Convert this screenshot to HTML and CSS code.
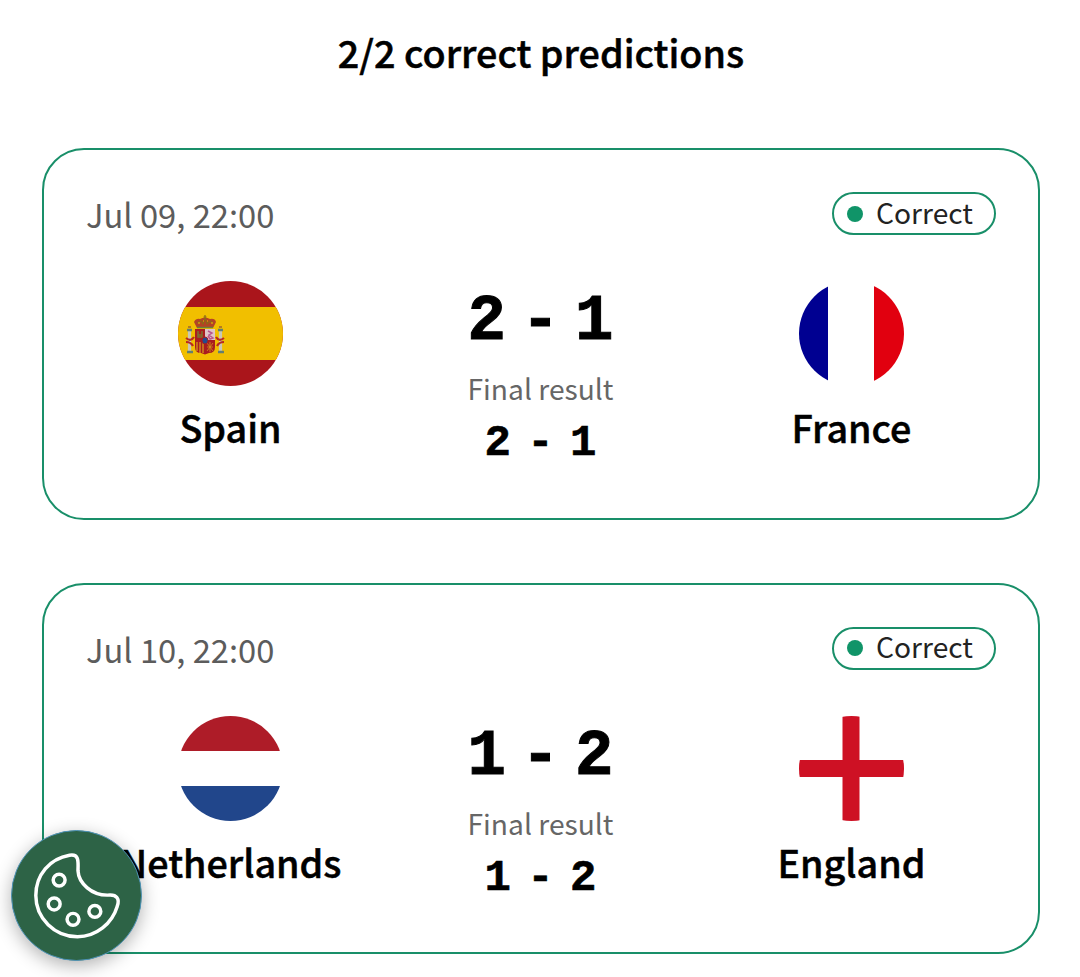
FILE: index.html
```html
<!DOCTYPE html>
<html lang="en">
    <head>
        <meta charset="UTF-8">
        <title>Predictions</title>
        <link rel="stylesheet" href="styles.css">
    </head>
    <body>
        <h1>2/2 correct predictions</h1>
        <div class="card">
            <div class="card-top">
                <span class="date">Jul 09, 22:00</span>
                <span class="badge"><i class="dot"></i>Correct</span>
            </div>
            <div class="match">
                <div class="team">
                    <svg class="flag" viewBox="0 0 105 105">
                        <rect width="105" height="105" fill="#aa151b"/>
                        <rect y="26" width="105" height="53" fill="#f1bf00"/>
                        <!-- crown -->
                        <path d="M19 47l-3-6q2-4 6-3q5-3 10 0q5-1 6 3l-3 6z" fill="#b54325"/>
                        <path d="M19 42l4-2 2 3 2-6 2 6 3-3 3 2M27 34v5M25.500 36h3" fill="none" stroke="#8a6b18" stroke-width="1.200"/>
                        <path d="M20 42h2M25 40h1M29 40h1M33 42h2" stroke="#f1bf00" stroke-width="1.200"/>
                        <path d="M19 46.500h16" stroke="#6b8138" stroke-width="1.500"/>
                        <!-- pillars -->
                        <path d="M11.500 50v20M42.500 50v20" stroke="#c9c7b5" stroke-width="3.200"/>
                        <path d="M9 49h5M40 49h5M9 71h6M40 71h6" stroke="#647f70" stroke-width="2.500"/>
                        <path d="M10 46h3M41 46h3" stroke="#b47b20" stroke-width="2"/>
                        <path d="M8 57q5 4 8-1M8 61q5 0 7 4M46 57q-5 4-8-1M46 61q-5 0-7 4" fill="none" stroke="#b82b20" stroke-width="2.200"/>
                        <!-- shield -->
                        <path d="M17 48h20v18q0 6-6 6l-4 1.500-4-1.500q-6 0-6-6z" fill="#a91d20"/>
                        <path d="M27 48h10v11H27z" fill="#dfc5ca"/>
                        <path d="M30 50l4 2-3 2 4 3-3 1-2-3" fill="none" stroke="#b9568d" stroke-width="1.500"/>
                        <path d="M20 50v6h4v-6M19.500 54h5" fill="none" stroke="#7b7130" stroke-width="1.500"/>
                        <path d="M19 61v9M22 61v11M25 61v11" stroke="#dba516" stroke-width="1.200"/>
                        <path d="M29 62l6 8M35 62l-6 8M32 61v10M29 66h6" stroke="#d39418" stroke-width=".8"/>
                        <ellipse cx="27" cy="59.500" rx="3" ry="3.500" fill="#244b8d" stroke="#a91d20"/>
                    </svg>
                    <span class="name">Spain</span>
                </div>
                <div class="result">
                    <span class="score">2 - 1</span>
                    <span class="label">Final result</span>
                    <span class="final">2 - 1</span>
                </div>
                <div class="team">
                    <svg class="flag" viewBox="0 0 105 105">
                        <rect width="105" height="105" fill="#fff"/>
                        <rect width="29" height="105" fill="#000091"/>
                        <rect x="75" width="30" height="105" fill="#e1000f"/>
                    </svg>
                    <span class="name">France</span>
                </div>
            </div>
        </div>
        <div class="card">
            <div class="card-top">
                <span class="date">Jul 10, 22:00</span>
                <span class="badge"><i class="dot"></i>Correct</span>
            </div>
            <div class="match">
                <div class="team">
                    <svg class="flag" viewBox="0 0 105 105">
                        <rect width="105" height="105" fill="#fff"/>
                        <rect width="105" height="35" fill="#ae1c28"/>
                        <rect y="70" width="105" height="35" fill="#21468b"/>
                    </svg>
                    <span class="name">Netherlands</span>
                </div>
                <div class="result">
                    <span class="score">1 - 2</span>
                    <span class="label">Final result</span>
                    <span class="final">1 - 2</span>
                </div>
                <div class="team">
                    <svg class="flag" viewBox="0 0 105 105">
                        <rect width="105" height="105" fill="#fff"/>
                        <path d="M43.500 0h17v44H105v17H60.500v44h-17V61H0V44h43.500z" fill="#ce1124"/>
                    </svg>
                    <span class="name">England</span>
                </div>
            </div>
        </div>
        <button class="cookie" aria-label="Cookie settings">
            <svg viewBox="0 0 130 130" fill="none" stroke="#fff" stroke-width="3.500">
                <path d="M58 24.500C38 28 24 44 24 65C24 88 43 106.500 66 106.500C85 106.500 101 93 106 76C109 68 105 64.500 99 64.500C80 66 67 52 66.500 40C67 29 67 23 58 24.500Z"/>
                <circle cx="47.500" cy="49.500" r="6"/>
                <circle cx="42.500" cy="73.500" r="6"/>
                <circle cx="61.500" cy="89" r="6"/>
                <circle cx="83.500" cy="81" r="6"/>
            </svg>
        </button>
    </body>
</html>
```

FILE: styles.css
```css
* {
    box-sizing: border-box;
}

body {
    margin: 0;
    padding: 27px 40px 0 42px;
    height: 977px;
    overflow: hidden;
    background-color: #FFF;
    color: #000;
    font-family: "Noto Sans CJK SC", "Noto Sans", sans-serif;
}

h1 {
    margin: 0 0 71px;
    font-size: 37.7px;
    font-weight: 500;
    line-height: 50px;
    text-align: center;
    -webkit-text-stroke: 0.5px #000;
}

.card {
    height: 371.6px;
    margin-bottom: 63px;
    padding: 42px 42px 0 43px;
    border: 2px solid #198F69;
    border-radius: 42px;
}

.card-top {
    display: flex;
    justify-content: space-between;
    height: 44px;
}

.date {
    margin-left: -1px;
    color: #5C5C5C;
    font-size: 32.7px;
    line-height: 43px;
}

.badge {
    display: flex;
    align-items: center;
    gap: 13px;
    width: 164px;
    height: 43px;
    padding: 0 0 4px 13px;
    border: 2px solid #198F69;
    border-radius: 22px;
    color: #222;
    font-size: 28.2px;
    line-height: 36px;
}

.dot {
    position: relative;
    top: 2px;
    width: 16px;
    height: 16px;
    border-radius: 50%;
    background-color: #109468;
}

.match {
    display: grid;
    grid-template-columns: 287px 1fr 289px;
    padding-top: 45px;
}

.team, .result {
    display: flex;
    flex-direction: column;
    align-items: center;
    white-space: nowrap;
}

.flag {
    width: 105px;
    height: 105px;
    border-radius: 50%;
}

.name {
    margin-top: 16px;
    font-size: 37.7px;
    font-weight: 500;
    line-height: 50px;
    -webkit-text-stroke: 0.5px #000;
}

.score, .final {
    font-family: "Liberation Mono", "Courier New", monospace;
    font-weight: bold;
}

.score {
    padding-top: 6px;
    font-size: 64px;
    line-height: 70px;
    word-spacing: -23px;
    -webkit-text-stroke: 1px #000;
}

.label {
    margin-top: 11px;
    color: #666;
    font-size: 28.2px;
    line-height: 40px;
}

.final {
    margin-top: 10px;
    font-size: 44px;
    line-height: 50px;
    word-spacing: -10px;
    -webkit-text-stroke: 0.6px #000;
}

.cookie {
    position: fixed;
    left: 11px;
    top: 830px;
    width: 131px;
    height: 131px;
    padding: 0;
    border: 1px solid #4C91B5;
    border-radius: 50%;
    background-color: #2D6346;
    box-shadow: 0 5px 18px rgba(0, 0, 0, 0.3);
}

.cookie svg {
    display: block;
    width: 129px;
    height: 129px;
}
```
